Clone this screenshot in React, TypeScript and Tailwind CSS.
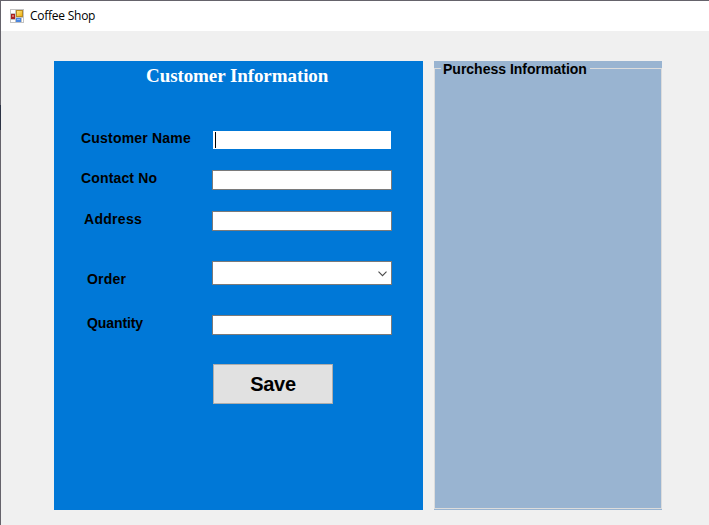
import React from "react";

type FieldProps = {
  label: string;
  row: string;
  labelClass: string;
  children: React.ReactNode;
};

function Field({ label, row, labelClass, children }: FieldProps) {
  return (
    <div className={`flex items-start ${row}`}>
      <label className={`block w-[158px] shrink-0 whitespace-nowrap text-[14px] font-bold leading-4 text-black ${labelClass}`}>
        {label}
      </label>
      {children}
    </div>
  );
}

function TextBox({ focused = false }: { focused?: boolean }) {
  return (
    <div
      className={`h-5 w-[180px] shrink-0 border bg-white ${focused ? "border-[#0078d7] pl-[2px] pt-px" : "border-[#7a7a7a]"}`}
    >
      {focused && <div className="h-4 w-px bg-black" />}
    </div>
  );
}

function FormIcon() {
  return (
    <svg width="14" height="14" viewBox="0 0 14 14" shapeRendering="crispEdges">
      <defs>
        <linearGradient id="gold" x1="0" y1="0" x2="1" y2="1">
          <stop offset="0" stopColor="#ffe680" />
          <stop offset="1" stopColor="#eeb010" />
        </linearGradient>
      </defs>
      <rect width="14" height="14" fill="#c3c3c3" />
      <rect x="1" y="1" width="4" height="3" fill="#fff" />
      <rect x="1" y="11" width="4" height="2" fill="#fff" />
      <rect x="12" y="9" width="1" height="4" fill="#fff" />
      <rect x="6" y="1" width="7" height="7" fill="#b98a20" />
      <rect x="7" y="2" width="5" height="5" fill="url(#gold)" />
      <rect x="1" y="5" width="4" height="5" fill="#a82020" />
      <rect x="2" y="6" width="2" height="2" fill="#dc7068" />
      <rect x="6" y="9" width="5" height="4" fill="#4a86e0" />
      <rect x="7" y="10" width="3" height="1" fill="#8fb8f5" />
    </svg>
  );
}

export default function App() {
  return (
    <div className="flex h-[525px] w-[709px] overflow-hidden bg-[#f0f0f0] font-['Liberation_Sans',sans-serif]">
      <div className="flex w-px shrink-0 flex-col bg-[#65636b]">
        <div className="mt-[105px] h-[25px] bg-[#2b3244]" />
      </div>
      <div className="flex min-w-0 flex-1 flex-col">
        <header className="flex h-[31px] shrink-0 items-center gap-[6px] border-t border-[#65636b] bg-white pl-[9px]">
          <FormIcon />
          <span className="whitespace-nowrap font-['Open_Sans',sans-serif] text-[12px] leading-4 tracking-[-0.25px] text-black">Coffee Shop</span>
        </header>
        <main className="flex gap-[11px] pl-[53px] pt-[30px]">
          <section className="h-[449px] w-[369px] bg-[#0078d7]">
            <h1 className="h-[69px] whitespace-nowrap pl-[92px] pt-[5px] font-['Liberation_Serif',serif] text-[19px] font-bold leading-5 tracking-[-0.08px] text-white">
              Customer Information
            </h1>
            <Field label="Customer Name" row="h-10" labelClass="pl-[27px] tracking-[0.2px]">
              <TextBox focused />
            </Field>
            <Field label="Contact No" row="h-[41px]" labelClass="pl-[27px] tracking-[0.15px]">
              <TextBox />
            </Field>
            <Field label="Address" row="h-[50px]" labelClass="pl-[30px] tracking-[0.3px]">
              <TextBox />
            </Field>
            <Field label="Order" row="h-[54px]" labelClass="pl-[33px] pt-[10px] tracking-[0.2px]">
              <div className="flex h-6 w-[180px] items-center justify-end border border-[#7a7a7a] bg-white pr-1 pt-px">
                <svg width="9" height="6" viewBox="0 0 9 6" fill="none" stroke="#4a4a4a" strokeWidth="1.1">
                  <path d="M0.5 0.7 4.5 4.7 8.5 0.7" />
                </svg>
              </div>
            </Field>
            <Field label="Quantity" row="h-[49px]" labelClass="pl-[33px] tracking-[-0.1px]">
              <TextBox />
            </Field>
            <button className="ml-[159px] flex h-10 w-[120px] items-center justify-center border border-[#adadad] bg-[#e1e1e1] text-[20px] font-bold tracking-[-0.3px] text-black">
              Save
            </button>
          </section>
          <section className="h-[449px] w-[228px] bg-[#99b4d1] pb-px">
            <fieldset className="h-[448px] border border-[#dcdcdc] pl-[6px]">
              <legend className="h-[15px] whitespace-nowrap pl-[2px] pr-[3px] text-[14px] font-bold leading-4 text-black">Purchess Information</legend>
            </fieldset>
          </section>
        </main>
      </div>
    </div>
  );
}
